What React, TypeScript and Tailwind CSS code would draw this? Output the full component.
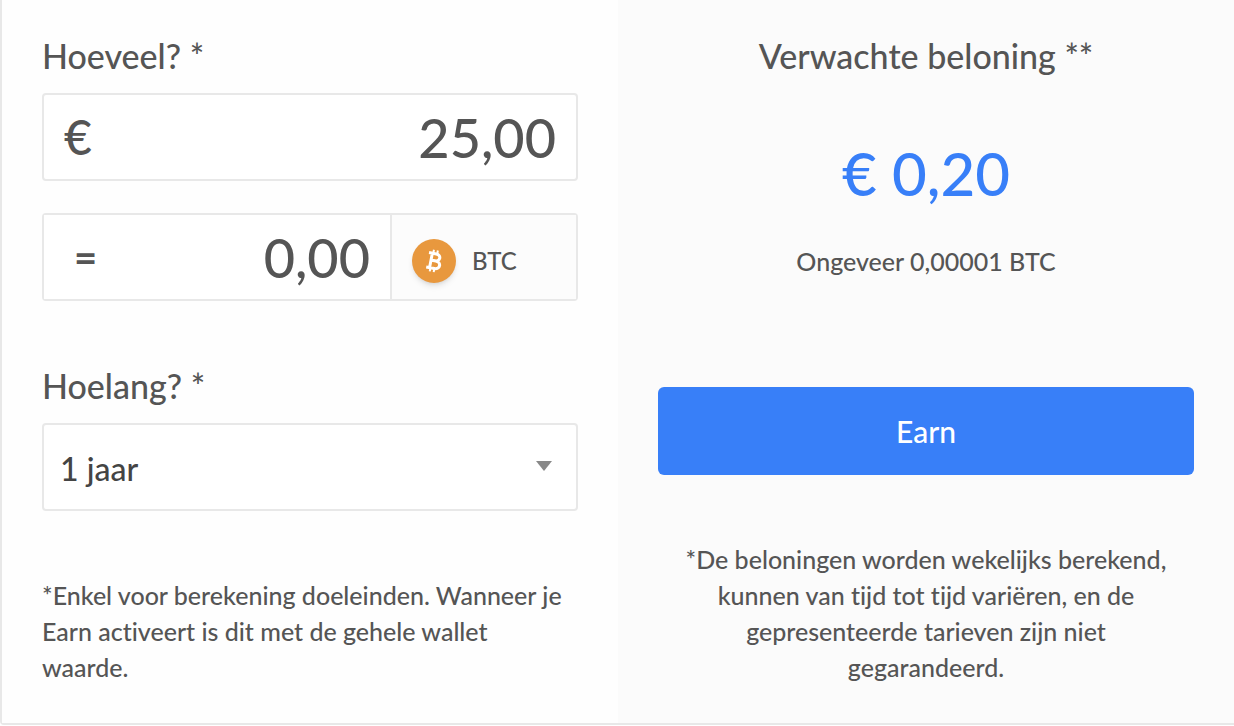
import { useState } from 'react';

const BitcoinIcon = () => {
    return (
        <svg viewBox="0 0 44 44" className="size-11 rounded-full bg-[#e8983e] shadow-md" aria-hidden="true">
            <g transform="rotate(11 22 22)" fill="none" stroke="#fff" strokeWidth="3" strokeLinejoin="round">
                <path d="M15.5 14.6h7.4c5.6 0 5.6 7 0 7h-4.4M18.5 21.6h5.2c6.2 0 6.2 7.8 0 7.8h-8.2M18.9 14.6v14.8" />
                <path d="M19.8 11v4M23.8 11v4M19.8 29v4M23.8 29v4" strokeWidth="2" />
            </g>
        </svg>
    );
}

const App = () => {
    const [amount, setAmount] = useState('25,00');
    const [period, setPeriod] = useState('1');

    return (
        <div className="bg-white font-['Lato',sans-serif] font-medium text-[#555] [font-variant-ligatures:none]">
        <main className="grid grid-cols-2 rounded-bl border-b-2 border-l-2 border-[#e8e8e8]">
            <section className="flex flex-col bg-[#fefefe] px-10 pt-9 pb-[38px]">
                <label htmlFor="amount" className="text-[34px] leading-10">Hoeveel? *</label>
                <div className="mt-[17px] flex h-22 items-center rounded border-2 border-[#e8e8e8] bg-white px-5">
                    <span className="text-5xl leading-none">€</span>
                    <input
                        id="amount"
                        value={amount}
                        onChange={(e) => setAmount(e.target.value)}
                        className="w-full min-w-0 flex-1 bg-transparent text-right text-[54px] leading-none outline-none"
                    />
                </div>

                <div className="mt-8 flex h-22 rounded border-2 border-[#e8e8e8]">
                    <div className="flex min-w-0 flex-1 items-center bg-white pr-5 pl-[30px]">
                        <span className="text-[40px] leading-none font-bold">=</span>
                        <input
                            aria-label="BTC"
                            value="0,00"
                            readOnly
                            className="w-full min-w-0 flex-1 bg-transparent text-right text-[54px] leading-none outline-none"
                        />
                    </div>
                    <div className="flex w-[186px] items-center gap-4 border-l-2 border-[#e8e8e8] bg-[#fcfcfc] px-5 pt-2">
                        <BitcoinIcon />
                        <span className="text-2xl">BTC</span>
                    </div>
                </div>

                <label htmlFor="period" className="mt-[65px] text-[34px] leading-10">Hoelang? *</label>
                <div className="relative mt-[17px]">
                    <select
                        id="period"
                        value={period}
                        onChange={(e) => setPeriod(e.target.value)}
                        className="h-22 w-full appearance-none rounded border-2 border-[#e8e8e8] bg-white px-4 pt-1 text-[32px] text-[#444] outline-none"
                    >
                        <option value="1">1 jaar</option>
                        <option value="2">2 jaar</option>
                        <option value="5">5 jaar</option>
                    </select>
                    <svg viewBox="0 0 16 10" className="pointer-events-none absolute top-[38px] right-[26px] h-[10px] w-4" aria-hidden="true">
                        <path d="M0 0h16L8 10z" fill="#888" />
                    </svg>
                </div>

                <p className="mt-[66px] text-[25px] leading-9">
                    *Enkel voor berekening doeleinden. Wanneer je<br />
                    Earn activeert is dit met de gehele wallet<br />
                    waarde.
                </p>
            </section>

            <section className="flex flex-col bg-[#fbfbfb] px-10 pt-9 pb-[38px] text-center">
                <h2 className="text-[34px] leading-10">Verwachte beloning **</h2>
                <p className="mt-[65px] text-[60px] leading-16 text-[#387ff8]">€ 0,20</p>
                <p className="mt-[38px] text-[25px] leading-9">Ongeveer 0,00001 BTC</p>
                <button type="button" className="mt-[108px] h-22 rounded-md bg-[#387ff8] text-3xl text-white">Earn</button>
                <p className="mt-[66px] text-[25px] leading-9">
                    *De beloningen worden wekelijks berekend,<br />
                    kunnen van tijd tot tijd variëren, en de<br />
                    gepresenteerde tarieven zijn niet<br />
                    gegarandeerd.
                </p>
            </section>
        </main>
        </div>
    );
}

export default App;
